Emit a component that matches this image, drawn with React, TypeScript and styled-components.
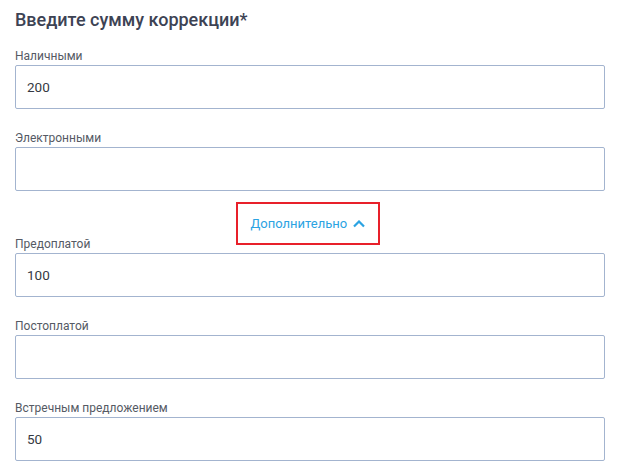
import React from "react";
import styled, { createGlobalStyle } from "styled-components";

const GlobalStyle = createGlobalStyle`
  body {
    margin: 0;
    background: #fff;
    font-family: Roboto, "Noto Sans", sans-serif;
  }
`;

const Page = styled.div`
  padding: 8px 17px 0 15px;
`;

const Title = styled.h2`
  margin: 0 0 16px;
  font-size: 18px;
  line-height: 24px;
  font-weight: 500;
  color: #3d4354;
`;

const Field = styled.div`
  margin-bottom: 21px;
`;

const Label = styled.label`
  display: block;
  font-size: 12px;
  line-height: 16px;
  margin-bottom: 1px;
  color: #555a64;
`;

const Input = styled.input`
  display: block;
  box-sizing: border-box;
  width: 100%;
  height: 44px;
  margin: 0;
  padding: 0 11px;
  border: 1px solid #a3b4cf;
  border-radius: 2px;
  font-family: Roboto, "Noto Sans", sans-serif;
  font-size: 13.5px;
  color: #353942;
  background: #fff;
  outline: none;
`;

const ToggleRow = styled.div`
  display: flex;
  justify-content: center;
  margin: -10px 0 -9px;
`;

const Toggle = styled.button`
  display: flex;
  align-items: center;
  gap: 6px;
  box-sizing: border-box;
  width: 144px;
  height: 43px;
  margin-left: -5px;
  padding: 0 0 0 13px;
  border: 2px solid #e8202a;
  background: #fff;
  font-family: Roboto, "Noto Sans", sans-serif;
  font-size: 13px;
  color: #2ba3e2;
  cursor: pointer;
`;

const fields: { label: string; value: string }[] = [
  { label: "Наличными", value: "200" },
  { label: "Электронными", value: "" },
  { label: "Предоплатой", value: "100" },
  { label: "Постоплатой", value: "" },
  { label: "Встречным предложением", value: "50" },
];

const renderField = (f: { label: string; value: string }) => (
  <Field key={f.label}>
    <Label>{f.label}</Label>
    <Input defaultValue={f.value} />
  </Field>
);

const App = () => {
  return (
    <Page>
      <GlobalStyle />
      <Title>Введите сумму коррекции*</Title>
      {fields.slice(0, 2).map(renderField)}
      <ToggleRow>
        <Toggle>
          Дополнительно
          <svg width="12" height="8" viewBox="0 0 12 8">
            <path d="M1 6.5 L6 1.5 L11 6.5" fill="none" stroke="#2ba3e2" strokeWidth="2.2" />
          </svg>
        </Toggle>
      </ToggleRow>
      {fields.slice(2).map(renderField)}
    </Page>
  );
};

export default App;
